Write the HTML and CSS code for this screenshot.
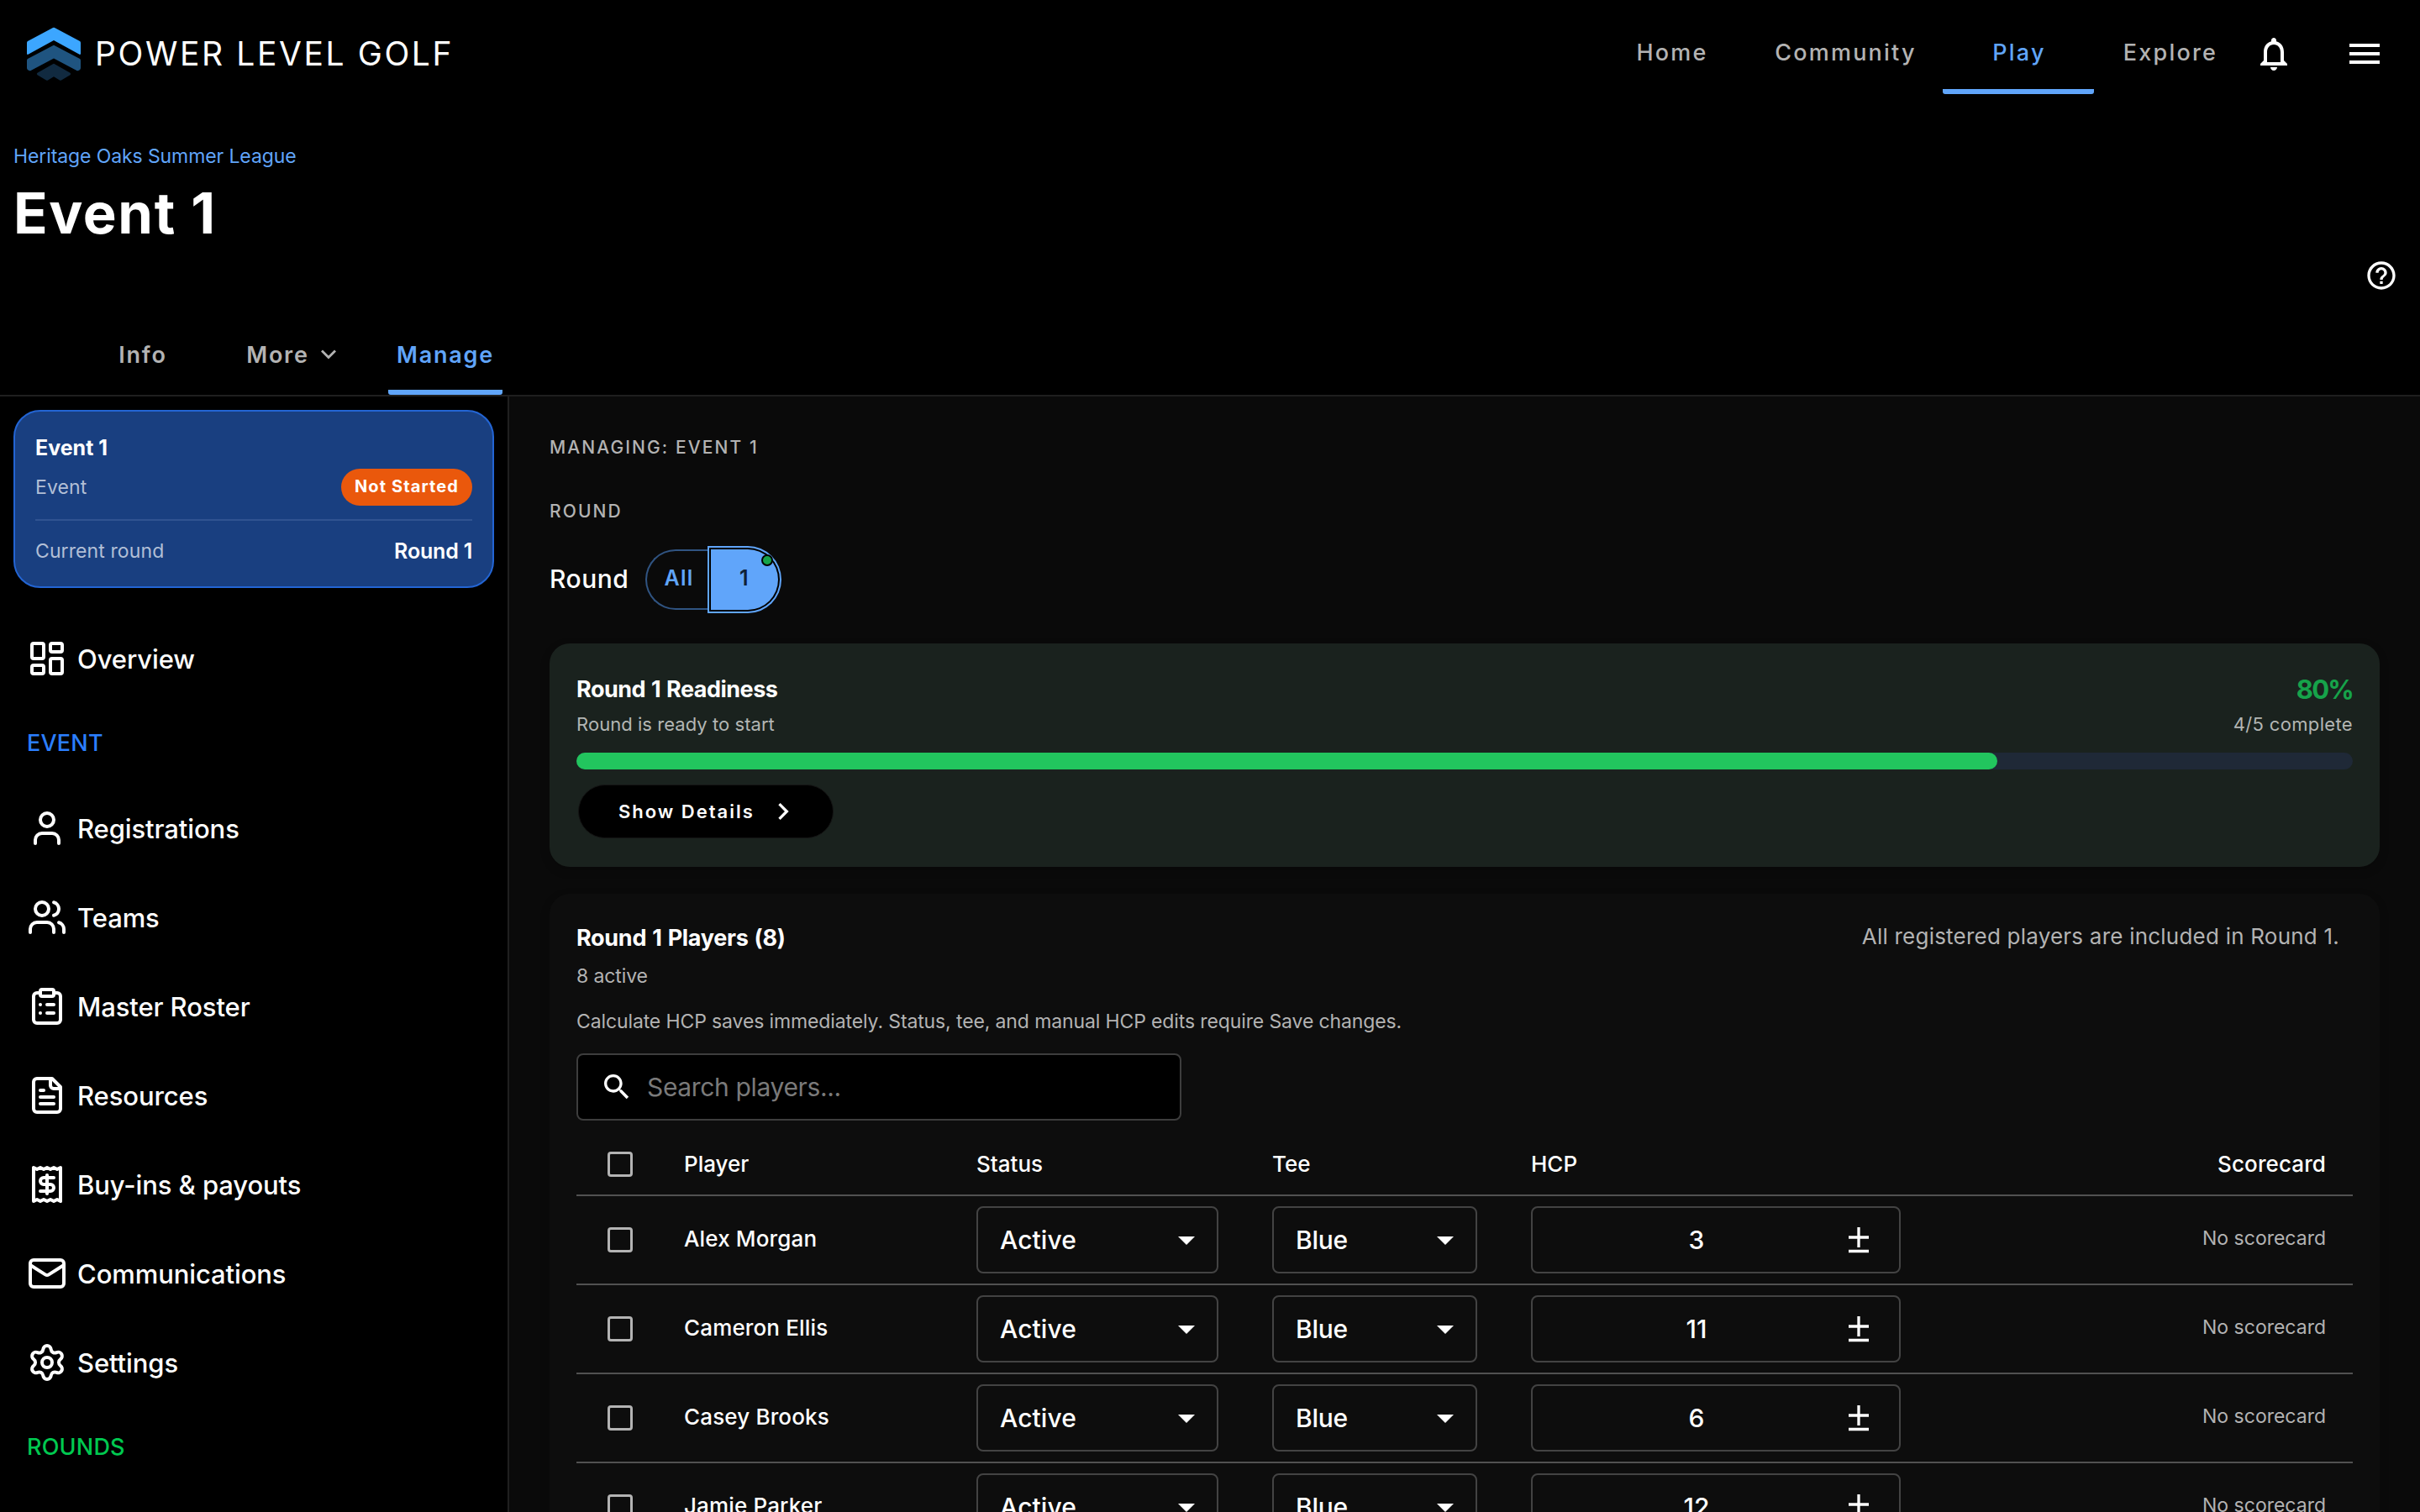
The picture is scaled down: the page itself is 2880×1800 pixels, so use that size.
FILE: index.html
```html
<!DOCTYPE html>
<html lang="en">
<head>
    <meta charset="UTF-8">
    <meta name="viewport" content="width=device-width, initial-scale=1.0">
    <title>Event 1 - Power Level Golf</title>
    <link rel="stylesheet" href="styles.css">
</head>
<body>
    <!-- Shared icons -->
    <svg class="defs" width="0" height="0">
        <symbol id="arrow-down" viewBox="0 0 24 24"><path d="M7 10l5 5 5-5z"/></symbol>
        <symbol id="plus-minus" viewBox="0 0 48 48">
            <path d="M24 9v24M12 21h24M12 37.5h24" fill="none" stroke="currentColor" stroke-width="3.3"/>
        </symbol>
    </svg>

    <!-- Top bar -->
    <header class="topbar">
        <div class="logo">
            <svg width="64" height="64" viewBox="32 32 64 64">
                <path fill="#3ca6ff" d="M63 33q1-.7 2 0l30 16q1 .6 1 2v12.800q0 1.700-1.500.9L64 48 33.500 64.700q-1.500.8-1.500-.9V51q0-1.400 1-2z"/>
                <path fill="#1f5480" d="M63 54.200q1-.7 2 0l30 15.800q1 .6 1 2v9q0 1.500-1.200 2.200l-1.500.7q-1 .5-2 0L64 69.500 36.700 83.900q-1 .5-2 0l-1.500-.7Q32 82.500 32 81v-9q0-1.400 1-2z"/>
                <path fill="#112a40" d="M63 76.200q1-.7 2 0l18.500 10.500q1.500 1.300 0 2.600L73 95.500q-1 .5-2 0L64 91.300 57 95.500q-1 .5-2 0L44.500 89.300q-1.500-1.300 0-2.600z"/>
            </svg>
            <span>POWER LEVEL GOLF</span>
        </div>
        <nav class="main-nav">
            <a class="nav-link">Home</a>
            <a class="nav-link wide">Community</a>
            <a class="nav-link active">Play</a>
            <a class="nav-link">Explore</a>
        </nav>
        <svg class="icon bell" viewBox="0 0 24 24"><path d="M12 22c1.100 0 2-.9 2-2h-4c0 1.100.9 2 2 2zm6-6v-5c0-3.070-1.630-5.640-4.500-6.320V4c0-.83-.67-1.500-1.500-1.500s-1.500.67-1.500 1.500v.68C7.640 5.360 6 7.920 6 11v5l-2 2v1h16v-1l-2-2zm-2 1H8v-6c0-2.480 1.510-4.500 4-4.500s4 2.020 4 4.500v6z"/></svg>
        <svg class="icon" viewBox="0 0 24 24"><path d="M3 18h18v-2H3v2zm0-5h18v-2H3v2zm0-7v2h18V6H3z"/></svg>
    </header>

    <!-- Event heading -->
    <section class="hero">
        <a class="league">Heritage Oaks Summer League</a>
        <h1>Event 1</h1>
        <div class="help">
            <svg width="40" height="40" viewBox="0 0 24 24"><path d="M11 18h2v-2h-2v2zm1-16C6.480 2 2 6.480 2 12s4.480 10 10 10 10-4.480 10-10S17.520 2 12 2zm0 18c-4.410 0-8-3.590-8-8s3.590-8 8-8 8 3.590 8 8-3.590 8-8 8zm0-14c-2.210 0-4 1.790-4 4h2c0-1.100.9-2 2-2s2 .9 2 2c0 2-3 1.750-3 5h2c0-2.250 3-2.500 3-5 0-2.210-1.790-4-4-4z"/></svg>
        </div>
    </section>

    <div class="tabs">
        <a class="tab info">Info</a>
        <a class="tab more">More
            <svg width="20" height="14" viewBox="0 0 20 14"><path d="M2 2.500l8 8 8-8" fill="none" stroke="currentColor" stroke-width="2.800"/></svg>
        </a>
        <a class="tab active">Manage</a>
    </div>

    <div class="layout">
        <!-- Sidebar -->
        <aside class="sidebar">
            <div class="event-card">
                <div class="event-name">Event 1</div>
                <div class="event-row">
                    <span class="muted">Event</span>
                    <span class="badge">Not Started</span>
                </div>
                <div class="event-row current">
                    <span class="muted">Current round</span>
                    <span class="strong">Round 1</span>
                </div>
            </div>

            <nav class="side-nav">
                <a class="side-item">
                    <svg viewBox="0 0 24 24"><rect width="7" height="9" x="3" y="3" rx="1"/><rect width="7" height="5" x="14" y="3" rx="1"/><rect width="7" height="9" x="14" y="12" rx="1"/><rect width="7" height="5" x="3" y="16" rx="1"/></svg>
                    Overview
                </a>
                <div class="side-heading blue">EVENT</div>
                <a class="side-item">
                    <svg viewBox="0 0 24 24"><path d="M19 21v-2a4 4 0 0 0-4-4H9a4 4 0 0 0-4 4v2"/><circle cx="12" cy="7" r="4"/></svg>
                    Registrations
                </a>
                <a class="side-item">
                    <svg viewBox="0 0 24 24"><path d="M16 21v-2a4 4 0 0 0-4-4H6a4 4 0 0 0-4 4v2"/><circle cx="9" cy="7" r="4"/><path d="M22 21v-2a4 4 0 0 0-3-3.870"/><path d="M16 3.130a4 4 0 0 1 0 7.750"/></svg>
                    Teams
                </a>
                <a class="side-item">
                    <svg viewBox="0 0 24 24"><rect width="8" height="4" x="8" y="2" rx="1" ry="1"/><path d="M16 4h2a2 2 0 0 1 2 2v14a2 2 0 0 1-2 2H6a2 2 0 0 1-2-2V6a2 2 0 0 1 2-2h2"/><path d="M12 11h4"/><path d="M12 16h4"/><path d="M8 11h.01"/><path d="M8 16h.01"/></svg>
                    Master Roster
                </a>
                <a class="side-item">
                    <svg viewBox="0 0 24 24"><path d="M15 2H6a2 2 0 0 0-2 2v16a2 2 0 0 0 2 2h12a2 2 0 0 0 2-2V7Z"/><path d="M14 2v4a2 2 0 0 0 2 2h4"/><path d="M10 9H8"/><path d="M16 13H8"/><path d="M16 17H8"/></svg>
                    Resources
                </a>
                <a class="side-item">
                    <svg viewBox="0 0 24 24"><path d="M4 2v20l2-1 2 1 2-1 2 1 2-1 2 1 2-1 2 1V2l-2 1-2-1-2 1-2-1-2 1-2-1-2 1Z"/><path d="M16 8h-6a2 2 0 1 0 0 4h4a2 2 0 1 1 0 4H8"/><path d="M12 17.500v-11"/></svg>
                    Buy-ins &amp; payouts
                </a>
                <a class="side-item">
                    <svg viewBox="0 0 24 24"><rect width="20" height="16" x="2" y="4" rx="2"/><path d="m22 7-8.970 5.700a1.940 1.940 0 0 1-2.060 0L2 7"/></svg>
                    Communications
                </a>
                <a class="side-item">
                    <svg viewBox="0 0 24 24"><path d="M9.671 4.136a2.340 2.340 0 0 1 4.659 0 2.340 2.340 0 0 0 3.319 1.915 2.340 2.340 0 0 1 2.330 4.033 2.340 2.340 0 0 0 0 3.831 2.340 2.340 0 0 1-2.330 4.033 2.340 2.340 0 0 0-3.319 1.915 2.340 2.340 0 0 1-4.659 0 2.340 2.340 0 0 0-3.320-1.915 2.340 2.340 0 0 1-2.330-4.033 2.340 2.340 0 0 0 0-3.831A2.340 2.340 0 0 1 6.350 6.051a2.340 2.340 0 0 0 3.319-1.915"/><circle cx="12" cy="12" r="3"/></svg>
                    Settings
                </a>
                <div class="side-heading green">ROUNDS</div>
            </nav>
        </aside>

        <!-- Manage content -->
        <main class="content">
            <div class="overline">MANAGING: EVENT 1</div>
            <div class="overline second">ROUND</div>

            <div class="round-picker">
                <span class="round-label">Round</span>
                <button class="toggle all">All</button>
                <button class="toggle selected">1<span class="dot"></span></button>
            </div>

            <section class="readiness">
                <div class="readiness-row top">
                    <span class="card-title">Round 1 Readiness</span>
                    <span class="percent">80%</span>
                </div>
                <div class="readiness-row sub">
                    <span>Round is ready to start</span>
                    <span class="count">4/5 complete</span>
                </div>
                <div class="progress"><div class="progress-bar" style="width: 80%"></div></div>
                <button class="details-btn">Show Details
                    <svg width="40" height="40" viewBox="0 0 24 24"><path d="M10 6L8.590 7.410 13.170 12l-4.580 4.590L10 18l6-6z"/></svg>
                </button>
            </section>

            <section class="players">
                <div class="players-head">
                    <span class="card-title">Round 1 Players (8)</span>
                    <span class="note">All registered players are included in Round 1.</span>
                </div>
                <p class="active-count">8 active</p>
                <p class="hint">Calculate HCP saves immediately. Status, tee, and manual HCP edits require Save changes.</p>

                <div class="search">
                    <svg width="40" height="40" viewBox="0 0 24 24"><path d="M15.500 14h-.79l-.28-.27C15.410 12.590 16 11.110 16 9.500 16 5.910 13.090 3 9.500 3S3 5.910 3 9.500 5.910 16 9.500 16c1.610 0 3.090-.59 4.230-1.570l.27.28v.79l5 4.990L20.490 19l-4.990-5zm-6 0C7.010 14 5 11.990 5 9.500S7.010 5 9.500 5 14 7.010 14 9.500 11.990 14 9.500 14z"/></svg>
                    <span>Search players...</span>
                </div>

                <div class="table">
                    <div class="row head">
                        <span class="checkbox"></span>
                        <span>Player</span>
                        <span>Status</span>
                        <span>Tee</span>
                        <span>HCP</span>
                        <span class="right">Scorecard</span>
                    </div>
                    <div class="row">
                        <span class="checkbox"></span>
                        <span class="name">Alex Morgan</span>
                        <div class="select status">Active<svg><use href="#arrow-down"/></svg></div>
                        <div class="select tee">Blue<svg><use href="#arrow-down"/></svg></div>
                        <div class="hcp"><span>3</span><svg><use href="#plus-minus"/></svg></div>
                        <span class="scorecard">No scorecard</span>
                    </div>
                    <div class="row">
                        <span class="checkbox"></span>
                        <span class="name">Cameron Ellis</span>
                        <div class="select status">Active<svg><use href="#arrow-down"/></svg></div>
                        <div class="select tee">Blue<svg><use href="#arrow-down"/></svg></div>
                        <div class="hcp"><span>11</span><svg><use href="#plus-minus"/></svg></div>
                        <span class="scorecard">No scorecard</span>
                    </div>
                    <div class="row">
                        <span class="checkbox"></span>
                        <span class="name">Casey Brooks</span>
                        <div class="select status">Active<svg><use href="#arrow-down"/></svg></div>
                        <div class="select tee">Blue<svg><use href="#arrow-down"/></svg></div>
                        <div class="hcp"><span>6</span><svg><use href="#plus-minus"/></svg></div>
                        <span class="scorecard">No scorecard</span>
                    </div>
                    <div class="row">
                        <span class="checkbox"></span>
                        <span class="name">Jamie Parker</span>
                        <div class="select status">Active<svg><use href="#arrow-down"/></svg></div>
                        <div class="select tee">Blue<svg><use href="#arrow-down"/></svg></div>
                        <div class="hcp"><span>12</span><svg><use href="#plus-minus"/></svg></div>
                        <span class="scorecard">No scorecard</span>
                    </div>
                </div>
            </section>
        </main>
    </div>
</body>
</html>
```
FILE: styles.css
```css
/* Basic Reset */
* {
    box-sizing: border-box;
    margin: 0;
    padding: 0;
}

body {
    font-family: Inter, "Liberation Sans", sans-serif;
    background-color: #000;
    color: #fff;
    height: 1800px;
    overflow: hidden;
    display: flex;
    flex-direction: column;
}

svg {
    display: block;
    flex-shrink: 0;
    fill: currentColor;
}

button {
    font-family: inherit;
    border: none;
}

.defs {
    position: absolute;
}

/* Top bar */
.topbar {
    height: 128px;
    flex-shrink: 0;
    display: flex;
    align-items: center;
    padding: 0 42px 0 32px;
}

.logo {
    display: flex;
    align-items: center;
    gap: 17px;
    margin-right: auto;
    font-size: 39px;
    letter-spacing: 2.6px;
}

.logo span {
    padding-bottom: 1px;
}

.main-nav {
    display: flex;
    align-self: flex-start;
}

.nav-link {
    width: 180px;
    height: 112px;
    padding-left: 2px;
    line-height: 126px;
    text-align: center;
    font-size: 27px;
    font-weight: 500;
    letter-spacing: 2.2px;
    color: #b3b3b3;
}

.nav-link.wide {
    width: 233px;
}

.nav-link.active,
.tab.active {
    color: #60a5fa;
    background: linear-gradient(#60a5fa, #60a5fa) bottom / 100% 6px no-repeat;
    border-radius: 3px;
}

.icon {
    width: 48px;
    height: 48px;
}

.bell {
    margin: 0 60px 0 10px;
}

/* Event heading */
.hero {
    padding: 38px 16px 0;
}

.league {
    display: block;
    line-height: 40px;
    font-size: 23px;
    letter-spacing: -0.1px;
    color: #60a5fa;
}

h1 {
    margin-top: 8px;
    line-height: 80px;
    font-size: 67px;
    font-weight: 700;
    letter-spacing: 1.6px;
}

.help {
    display: flex;
    justify-content: flex-end;
    padding-right: 10px;
    margin-top: 14px;
}

.tabs {
    display: flex;
    flex-shrink: 0;
    margin-top: 26px;
    padding-left: 100px;
    height: 98px;
    border-bottom: 2px solid #1f1f1f;
}

.tab {
    width: 136px;
    display: flex;
    align-items: center;
    justify-content: center;
    font-size: 27px;
    font-weight: 600;
    letter-spacing: 1.8px;
    color: #b3b3b3;
}

.tab.info {
    width: 140px;
}

.tab.more {
    width: 214px;
    gap: 13px;
    margin-right: 8px;
}

/* Layout */
.layout {
    flex: 1;
    min-height: 0;
    display: flex;
}

.sidebar {
    width: 606px;
    flex-shrink: 0;
    padding: 16px;
    border-right: 2px solid #1f1f1f;
}

.event-card {
    height: 212px;
    padding: 23px 24px;
    border: 2px solid #2365d4;
    border-radius: 32px;
    background: #193f80;
}

.event-name {
    line-height: 40px;
    font-size: 25px;
    font-weight: 700;
}

.event-row {
    margin-top: 5px;
    display: flex;
    justify-content: space-between;
    align-items: center;
    font-size: 23px;
    letter-spacing: 0.1px;
}

.event-row.current {
    margin-top: 16px;
    padding-top: 16px;
    line-height: 40px;
    border-top: 2px solid #305391;
}

.muted {
    color: #b2bfd6;
}

.badge {
    height: 44px;
    width: 156px;
    line-height: 42px;
    text-align: center;
    border-radius: 22px;
    background: #ea580c;
    font-size: 20px;
    font-weight: 700;
    letter-spacing: 1.1px;
}

.strong {
    font-size: 25px;
    font-weight: 600;
    letter-spacing: -0.2px;
}

.side-nav {
    margin-top: 31px;
}

.side-item {
    height: 106px;
    padding-left: 16px;
    display: flex;
    align-items: center;
    gap: 12px;
    font-size: 31px;
    font-weight: 500;
    letter-spacing: -0.1px;
}

.side-item svg {
    width: 48px;
    height: 48px;
    fill: none;
    stroke: currentColor;
    stroke-width: 2;
    stroke-linecap: round;
    stroke-linejoin: round;
}

.side-heading {
    height: 96px;
    line-height: 96px;
    padding-left: 16px;
    font-size: 27px;
    font-weight: 500;
    letter-spacing: 0.2px;
}

.blue {
    color: #2b7fff;
}

.green {
    color: #00c950;
}

/* Content */
.content {
    flex: 1;
    min-width: 0;
    padding: 41px 48px 0;
    background: #0a0a0a;
    display: flex;
    flex-direction: column;
    overflow: hidden;
}

.overline {
    line-height: 40px;
    font-size: 21px;
    font-weight: 500;
    letter-spacing: 2.1px;
    color: #b3b3b3;
}

.overline.second {
    margin-top: 36px;
}

.round-picker {
    margin-top: 25px;
    display: flex;
    align-items: center;
}

.round-label {
    width: 114px;
    font-size: 30px;
    font-weight: 500;
    letter-spacing: 0.5px;
    padding-bottom: 2px;
}

.toggle {
    height: 72px;
    padding-bottom: 5px;
    font-size: 25px;
    font-weight: 600;
    letter-spacing: 1.2px;
}

.toggle.all {
    width: 78px;
    border: 2px solid #305482;
    border-right: none;
    border-radius: 36px 0 0 36px;
    background: none;
    color: #60a5fa;
}

.toggle.selected {
    position: relative;
    width: 80px;
    border-radius: 0 36px 36px 0;
    background: #60a5fa;
    color: #0f2138;
    box-shadow: 0 0 0 2px #000, 0 0 0 4px #60a5fa;
}

.dot {
    position: absolute;
    top: 6px;
    right: 6px;
    width: 14px;
    height: 14px;
    border: 2px solid #000;
    border-radius: 50%;
    background: #16a34a;
}

.readiness {
    flex-shrink: 0;
    margin-top: 40px;
    height: 266px;
    padding: 32px;
    border-radius: 24px;
    background: #1a221e;
    box-shadow: 0 4px 12px rgba(0, 0, 0, 0.2);
}

.readiness-row {
    display: flex;
    justify-content: space-between;
}

.readiness-row.top {
    height: 44px;
    line-height: 46px;
}

.readiness-row.sub {
    line-height: 40px;
    font-size: 22px;
    letter-spacing: 0.05px;
    color: #b3b6b4;
}

.card-title {
    font-size: 27px;
    font-weight: 700;
    letter-spacing: -0.5px;
    word-spacing: 1px;
}

.percent {
    font-size: 31px;
    font-weight: 700;
    letter-spacing: -1.8px;
    color: #16a34a;
}

.count {
    letter-spacing: 0.35px;
}

.progress {
    margin-top: 14px;
    height: 20px;
    border-radius: 10px;
    background: #1f2937;
}

.progress-bar {
    height: 100%;
    border-radius: 10px;
    background: #22c55e;
}

.details-btn {
    margin: 18px 0 0 2px;
    width: 304px;
    height: 64px;
    padding-left: 47px;
    display: flex;
    align-items: center;
    gap: 14px;
    border: 1px solid #141414;
    border-radius: 32px;
    background: #000;
    color: #fff;
    font-size: 22px;
    font-weight: 600;
    letter-spacing: 2px;
}

/* Players */
.players {
    flex: 1;
    min-height: 0;
    margin-top: 32px;
    padding: 32px 32px 0;
    border-radius: 24px 24px 0 0;
    background: #0d0d0d;
    box-shadow: 0 4px 12px rgba(0, 0, 0, 0.2);
}

.players-head {
    display: flex;
    justify-content: space-between;
    height: 40px;
    line-height: 41px;
}

.players-head .card-title {
    letter-spacing: -0.3px;
}

.note {
    padding-right: 16px;
    line-height: 37px;
    font-size: 26px;
    letter-spacing: 0.22px;
    color: #b3b3b3;
}

.active-count,
.hint {
    line-height: 36px;
    font-size: 23px;
    letter-spacing: -0.12px;
    color: #b3b3b3;
}

.active-count {
    margin-top: 8px;
}

.hint {
    margin-top: 18px;
}

.search {
    margin-top: 20px;
    width: 720px;
    height: 80px;
    padding-left: 26px;
    display: flex;
    align-items: center;
    gap: 16px;
    border: 2px solid #3d3d3d;
    border-radius: 8px;
    background: #000;
    font-size: 30px;
    letter-spacing: -0.35px;
}

.search span {
    color: #7a7a7a;
}

.table {
    margin-top: 14px;
}

.row {
    display: grid;
    grid-template-columns: 128px 348px 352px 308px 440px 1fr;
    align-items: center;
    height: 106px;
    border-bottom: 2px solid #515151;
    font-size: 26px;
    font-weight: 500;
}

.row.head {
    height: 76px;
}

.row.head .checkbox {
    margin-top: 2px;
}

.checkbox {
    width: 30px;
    height: 30px;
    margin-left: 37px;
    border: 3px solid #b3b3b3;
    border-radius: 4px;
}

.name {
    padding-bottom: 3px;
    letter-spacing: 0.15px;
}

.select,
.hcp {
    height: 80px;
    display: flex;
    align-items: center;
    border: 2px solid #434343;
    border-radius: 8px;
    font-size: 30px;
}

.select {
    justify-content: space-between;
    padding: 0 12px 0 26px;
}

.select svg,
.hcp svg {
    width: 48px;
    height: 48px;
}

.status {
    width: 288px;
    letter-spacing: 0.1px;
}

.tee {
    width: 244px;
    letter-spacing: -0.3px;
}

.hcp {
    padding: 0 24px 0 26px;
}

.hcp span {
    flex: 1;
    text-align: center;
}

.right,
.scorecard {
    text-align: right;
    padding-right: 32px;
}

.right {
    letter-spacing: 0.1px;
}

.scorecard {
    padding-bottom: 5px;
    font-size: 23px;
    font-weight: 400;
    color: #b3b3b3;
}
```
